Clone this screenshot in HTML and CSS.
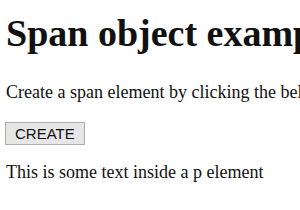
FILE: index.html
```html
<!DOCTYPE html>
<html lang="en">
<head>
<meta charset="UTF-8">
<title>Span object example</title>
<link rel="stylesheet" href="styles.css">
</head>
<body>
<h1>Span object example</h1>
<p class="intro">Create a span element by clicking the below button.</p>
<button class="create-btn" onclick="createSpan()">CREATE</button>
<p id="target">This is some text inside a p element</p>
<script>
function createSpan() {
  var s = document.createElement('span');
  s.textContent = 'This is a span element.';
  document.getElementById('target').appendChild(s);
}
</script>
</body>
</html>
```

FILE: styles.css
```css
html, body {
  overflow: hidden;
}

body {
  margin: 0;
  padding: 12px 6px;
  font-family: "Liberation Serif", "Times New Roman", serif;
  font-size: 18px;
  line-height: 21px;
  color: #111;
  background: #fff;
  white-space: nowrap;
}

h1 {
  font-size: 38px;
  line-height: 43px;
  margin: 0 0 27px;
}

p {
  margin: 0;
}

.intro {
  margin-bottom: 19px;
}

.create-btn {
  display: block;
  height: 23px;
  margin: 0 0 17px -1px;
  padding: 0 9px;
  font-family: "Liberation Sans", Arial, sans-serif;
  font-size: 15px;
  color: #111;
  background: #e6e6e6;
  border: 1px solid #adadad;
  border-radius: 0;
}
```
